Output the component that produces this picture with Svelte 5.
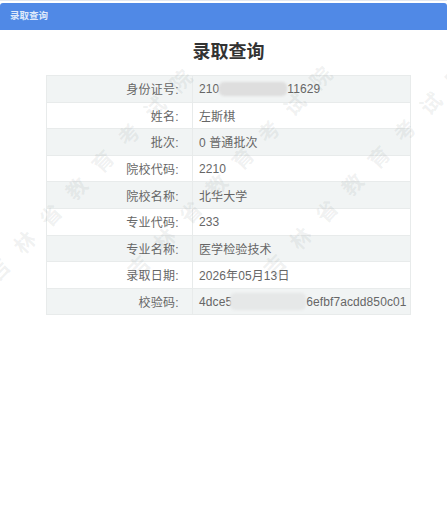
<script>
  const rows = [
    { label: '身份证号:', value: '210', tail: '11629', mask: 'short' },
    { label: '姓名:', value: '左斯棋' },
    { label: '批次:', value: '0 普通批次' },
    { label: '院校代码:', value: '2210' },
    { label: '院校名称:', value: '北华大学' },
    { label: '专业代码:', value: '233' },
    { label: '专业名称:', value: '医学检验技术' },
    { label: '录取日期:', value: '2026年05月13日' },
    { label: '校验码:', value: '4dce5', tail: '6efbf7acdd850c01', mask: 'long' }
  ];

  // diagonal watermark lines
  const marks = [
    { x: -16, y: 269 },
    { x: 124, y: 266 },
    { x: 260, y: 265 }
  ];
</script>

<div class="page">
  <header class="bar">录取查询</header>
  <h1>录取查询</h1>
  <table>
    <tbody>
      {#each rows as row}
        <tr>
          <th>{row.label}</th>
          <td>
            <span>{row.value}</span>{#if row.mask}<span class="mask {row.mask}"></span><span>{row.tail}</span>{/if}
          </td>
        </tr>
      {/each}
    </tbody>
  </table>
  <div class="marks" aria-hidden="true">
    {#each marks as m}
      <span class="mark" style="left:{m.x}px;top:{m.y}px">吉林省教育考试院</span>
    {/each}
  </div>
</div>

<style>
  :global(body) {
    background: #fff;
  }
  .page {
    position: relative;
    width: 447px;
    height: 517px;
    overflow: hidden;
    padding-top: 2px;
    border-top: 1px solid #e3e8f0;
    box-sizing: border-box;
    font-family: "Liberation Sans", "Noto Sans CJK SC", sans-serif;
    color: #666;
  }
  .bar {
    height: 27px;
    line-height: 26px;
    padding-left: 10px;
    background: #5089e6;
    border-radius: 3px 3px 0 0;
    color: #dfe9fa;
    font-size: 9.5px;
    font-weight: bold;
  }
  h1 {
    margin: 10px 0 11px;
    padding-left: 10px;
    height: 24px;
    line-height: 24px;
    text-align: center;
    font-size: 18px;
    font-weight: bold;
    color: #333;
  }
  table {
    width: 365px;
    margin-left: 46px;
    border-collapse: collapse;
    table-layout: fixed;
    font-size: 12px;
    border: 1px solid #e8ebeb;
  }
  tr {
    height: 26.6px;
  }
  tr:nth-child(odd) {
    background: #f1f4f4;
  }
  th {
    width: 146px;
    box-sizing: border-box;
    padding: 0 13px 0 0;
    text-align: right;
    font-weight: normal;
    letter-spacing: 0.3px;
    border-right: 1px solid #e8ebeb;
    border-bottom: 1px solid #e8ebeb;
  }
  td {
    padding: 0 0 0 6px;
    white-space: nowrap;
    overflow: hidden;
    letter-spacing: 0.1px;
    border-bottom: 1px solid #e8ebeb;
  }
  .mask {
    display: inline-block;
    height: 14px;
    vertical-align: -3px;
    background: #dedede;
    border-radius: 5px;
    filter: blur(1px);
  }
  .mask.short {
    width: 68px;
  }
  .mask.long {
    width: 76px;
    height: 17px;
    margin-left: -2px;
    vertical-align: -4px;
    background: #e6e8e8;
  }
  .marks {
    position: absolute;
    inset: 0;
    pointer-events: none;
  }
  .mark {
    position: absolute;
    font-size: 21px;
    font-weight: bold;
    line-height: 1;
    letter-spacing: 16.5px;
    white-space: nowrap;
    color: rgba(110, 120, 120, 0.1);
    transform: rotate(-46deg);
    transform-origin: 0 0;
  }
</style>
